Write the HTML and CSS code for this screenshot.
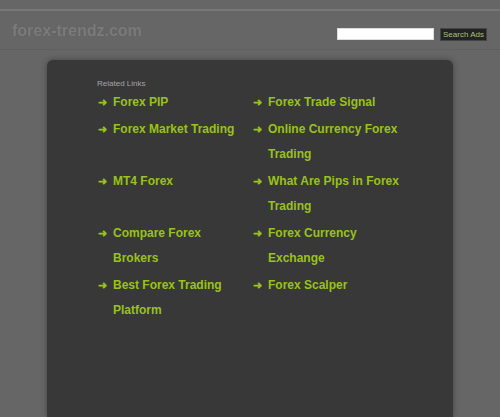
FILE: index.html
```html
<!DOCTYPE html>
<html>
<head>
<meta charset="utf-8">
<link rel="stylesheet" href="styles.css">
</head>
<body>
<div class="topline"></div>
<header class="header">
  <div class="logo">forex-trendz.com</div>
  <form class="search">
    <input class="search-input" type="text">
    <button class="search-btn" type="button">Search Ads</button>
  </form>
</header>
<main class="panel">
  <div class="related">Related Links</div>
  <ul class="links">
    <li><span class="arrow">&#10140;</span><a>Forex PIP</a></li>
    <li><span class="arrow">&#10140;</span><a>Forex Trade Signal</a></li>
    <li><span class="arrow">&#10140;</span><a>Forex Market Trading</a></li>
    <li><span class="arrow">&#10140;</span><a>Online Currency Forex Trading</a></li>
    <li><span class="arrow">&#10140;</span><a>MT4 Forex</a></li>
    <li><span class="arrow">&#10140;</span><a>What Are Pips in Forex Trading</a></li>
    <li><span class="arrow">&#10140;</span><a>Compare Forex Brokers</a></li>
    <li><span class="arrow">&#10140;</span><a>Forex Currency Exchange</a></li>
    <li><span class="arrow">&#10140;</span><a>Best Forex Trading Platform</a></li>
    <li><span class="arrow">&#10140;</span><a>Forex Scalper</a></li>
  </ul>
</main>
</body>
</html>
```
FILE: styles.css
```css
html, body {
  margin: 0;
  padding: 0;
  height: 100%;
  overflow: hidden;
}
body {
  background: #666666;
  font-family: "Liberation Sans", Arial, sans-serif;
  display: flex;
  flex-direction: column;
}
.topline {
  height: 9px;
  border-bottom: 2px solid #787878;
}
.header {
  height: 38px;
  display: flex;
  align-items: center;
  justify-content: space-between;
  padding: 0 13px 0 12px;
  border-bottom: 1px solid #5f5f5f;
}
.logo {
  font-size: 16px;
  font-weight: bold;
  color: #7b7b7b;
  text-shadow: 0 0 1px rgba(0,0,0,0.15);
  margin-top: 1px;
}
.search {
  display: flex;
  align-items: center;
  gap: 6px;
  margin: 8px 0 0 0;
}
.search-input {
  width: 95px;
  height: 10px;
  padding: 0;
  border: 1px solid #dddddd;
  background: #ffffff;
  box-sizing: content-box;
}
.search-btn {
  width: 47px;
  height: 13px;
  padding: 0;
  border: 1px solid #444;
  background: #222222;
  color: #a9c27a;
  font-family: "Liberation Sans", Arial, sans-serif;
  font-size: 8px;
  line-height: 11px;
}
.panel {
  margin: 10px 47px 0 47px;
  flex: 1;
  background: #383838;
  border-radius: 6px 6px 0 0;
  box-shadow: 0 0 6px rgba(0,0,0,0.35);
  padding: 18px 0 0 50px;
}
.related {
  font-size: 8px;
  color: #a5a5a5;
  line-height: 12px;
}
.links {
  list-style: none;
  margin: 0;
  padding: 0;
  display: grid;
  grid-template-columns: 155px 170px;
  align-items: start;
}
.links li {
  display: flex;
  font-size: 12px;
  font-weight: bold;
  line-height: 25px;
  margin-bottom: 2px;
  padding-right: 14px;
  color: #99c21a;
}
.arrow {
  width: 16px;
  flex: none;
  font-size: 11px;
  padding-left: 1px;
  box-sizing: border-box;
}
.links a {
  color: #99c21a;
}
```
